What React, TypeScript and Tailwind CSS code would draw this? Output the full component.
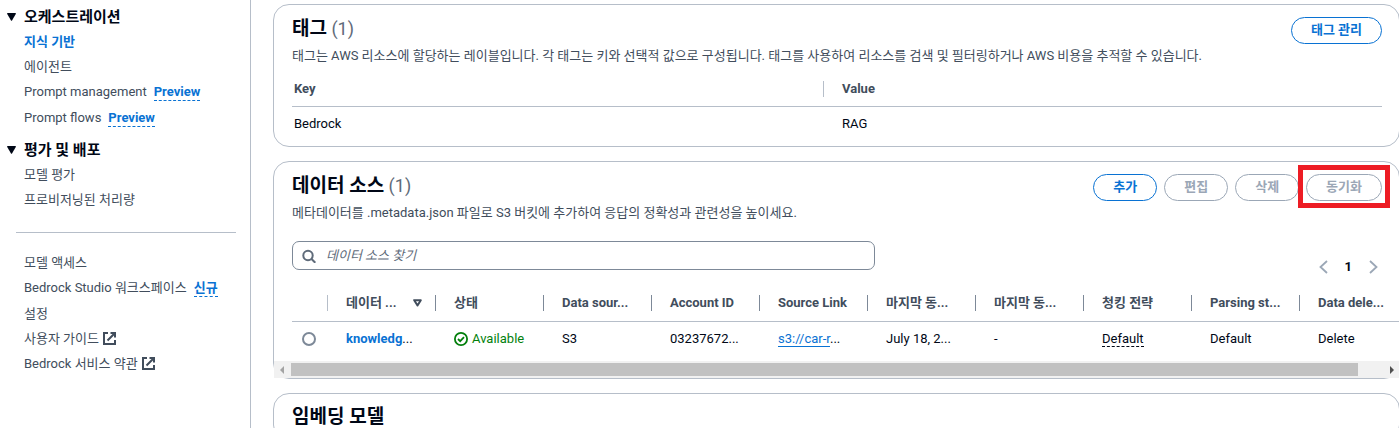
import { clsx } from "clsx";
import type { ReactNode } from "react";

interface NavItem {
  label: string;
  badge?: string;
  active?: boolean;
  external?: boolean;
}

const orchestration: NavItem[] = [
  { label: "지식 기반", active: true },
  { label: "에이전트" },
  { label: "Prompt management", badge: "Preview" },
  { label: "Prompt flows", badge: "Preview" },
];

const evaluation: NavItem[] = [{ label: "모델 평가" }, { label: "프로비저닝된 처리량" }];

const general: NavItem[] = [
  { label: "모델 액세스" },
  { label: "Bedrock Studio 워크스페이스", badge: "신규" },
  { label: "설정" },
  { label: "사용자 가이드", external: true },
  { label: "Bedrock 서비스 약관", external: true },
];

const columns = [
  "데이터 ...",
  "상태",
  "Data sour...",
  "Account ID",
  "Source Link",
  "마지막 동...",
  "마지막 동...",
  "청킹 전략",
  "Parsing st...",
  "Data dele...",
];

function ExternalIcon() {
  return (
    <svg className="size-[13px] shrink-0" viewBox="0 0 13 13" fill="none" stroke="currentColor" strokeWidth="2">
      <path d="M5 1H1v11h11V8" />
      <path d="M7.5 1H12v4.5M12 1 4.5 8.5" />
    </svg>
  );
}

function SearchIcon() {
  return (
    <svg className="size-[14px] shrink-0 text-[#5f6b7a]" viewBox="0 0 14 14" fill="none" stroke="currentColor" strokeWidth="2">
      <circle cx="6" cy="6.5" r="4.7" />
      <path d="m9.5 10 3.8 3.8" />
    </svg>
  );
}

function StatusIcon() {
  return (
    <svg className="size-[14px] shrink-0" viewBox="0 0 14 14" fill="none" stroke="currentColor" strokeWidth="1.8">
      <circle cx="7" cy="7" r="6.1" />
      <path d="m4 7 2.2 2.2L10 5.2" />
    </svg>
  );
}

function NavLink({ item }: { item: NavItem }) {
  return (
    <li className={clsx("flex items-center gap-[7px] whitespace-nowrap", item.badge ? "h-[26px]" : "h-[25px]")}>
      <a
        href="#"
        className={clsx("flex items-center gap-1", item.active ? "font-bold text-[#0972d3]" : "text-[#414d5c]")}
      >
        {item.label}
        {item.external && <ExternalIcon />}
      </a>
      {item.badge && (
        <a href="#" className="border-b border-dashed border-[#0972d3] leading-[17px] font-bold text-[#0972d3]">
          {item.badge}
        </a>
      )}
    </li>
  );
}

function NavSection({ title, items }: { title: string; items: NavItem[] }) {
  return (
    <section>
      <button type="button" className="flex h-[25px] items-center gap-2 text-[15px] font-bold text-[#000716]">
        <svg className="h-2 w-[9px]" viewBox="0 0 9 8" fill="currentColor">
          <path d="M.5 0h8Q9 .2 8.8 1L5 7.5Q4.5 8.2 4 7.5L.2 1Q0 .2.5 0Z" />
        </svg>
        {title}
      </button>
      <ul className="pl-[17px]">
        {items.map((item) => (
          <NavLink key={item.label} item={item} />
        ))}
      </ul>
    </section>
  );
}

function Button({ children, disabled }: { children: ReactNode; disabled?: boolean }) {
  return (
    <button
      type="button"
      disabled={disabled}
      className={clsx(
        "flex h-[27px] items-center rounded-full border px-[19px] pb-[2px] font-bold whitespace-nowrap",
        disabled ? "border-[#9ba7b6] text-[#9ba7b6]" : "border-[#0972d3] text-[#0972d3]",
      )}
    >
      {children}
    </button>
  );
}

function Title({ children, count }: { children: string; count?: number }) {
  return (
    <h2 className="text-[19px] leading-6 font-bold text-[#000716]">
      {children}
      {count !== undefined && <span className="text-[18px] font-normal text-[#5f6b7a]"> ({count})</span>}
    </h2>
  );
}

function Card({ children }: { children: ReactNode }) {
  return <section className="relative rounded-2xl border border-[#b6bec9] bg-white">{children}</section>;
}

function TagsCard() {
  return (
    <Card>
      <div className="pt-3 pr-[17px] pb-[5px] pl-[18px]">
        <div className="flex items-start justify-between">
          <Title count={1}>태그</Title>
          <Button>태그 관리</Button>
        </div>
        <p className="leading-6 text-[#414d5c]">
          태그는 AWS 리소스에 할당하는 레이블입니다. 각 태그는 키와 선택적 값으로 구성됩니다. 태그를 사용하여 리소스를
          검색 및 필터링하거나 AWS 비용을 추적할 수 있습니다.
        </p>
        <table className="mt-1 w-full table-fixed text-left">
          <thead>
            <tr className="border-b border-[#b6bec9] text-[#414d5c]">
              <th className="h-[34px] w-[532px] pl-[2px]">
                <div className="flex h-4 items-center border-r border-[#b6bec9]">Key</div>
              </th>
              <th className="pl-[18px]">Value</th>
            </tr>
          </thead>
          <tbody>
            <tr>
              <td className="h-[35px] pl-[2px]">Bedrock</td>
              <td className="pl-[18px]">RAG</td>
            </tr>
          </tbody>
        </table>
      </div>
    </Card>
  );
}

function Scrollbar() {
  return (
    <div className="flex h-[17px] items-center bg-[#f1f1f1]">
      <svg className="h-2 w-[17px] shrink-0 text-[#a3a3a3]" viewBox="0 0 17 8" fill="currentColor">
        <path d="M10 0v8L6 4Z" />
      </svg>
      <div className="h-[13px] grow bg-[#c1c1c1]" />
      <svg className="ml-6 h-2 w-[17px] shrink-0 text-[#505050]" viewBox="0 0 17 8" fill="currentColor">
        <path d="M8 0v8l4-4Z" />
      </svg>
    </div>
  );
}

function DataSourceTable() {
  return (
    <div className="overflow-hidden pb-[5px] pl-[18px]">
      <table className="w-[1116px] table-fixed text-left whitespace-nowrap">
        <thead>
          <tr className="border-b border-[#b6bec9] text-[#414d5c]">
            <th className="h-9 w-9">
              <div className="h-4 border-r border-[#b6bec9]" />
            </th>
            {columns.map((column, i) => (
              <th key={i} className="w-[108px]">
                <div className="flex h-4 items-center justify-between border-r border-[#7d8998] pr-[13px] pl-[18px]">
                  {column}
                  {i === 0 && (
                    <svg className="h-2 w-[9px]" viewBox="0 0 9 8" fill="none" stroke="currentColor" strokeWidth="2">
                      <path d="M1.2 1.2h6.6L4.5 6.5Z" strokeLinejoin="round" />
                    </svg>
                  )}
                </div>
              </th>
            ))}
          </tr>
        </thead>
        <tbody>
          <tr className="[&>td]:pl-[18px]">
            <td className="h-[35px] pl-[10px]!">
              <input
                type="radio"
                name="source"
                aria-label="knowledge-base"
                className="block size-[14px] appearance-none rounded-full border-2 border-[#7d8998]"
              />
            </td>
            <td>
              <a href="#" className="font-bold text-[#0972d3]">
                knowledg
              </a>
              ...
            </td>
            <td>
              <span className="flex items-center gap-1 text-[#037f0c]">
                <StatusIcon />
                Available
              </span>
            </td>
            <td>S3</td>
            <td>03237672...</td>
            <td>
              <a href="#" className="border-b border-[#0972d3] text-[#0972d3]">
                s3://car-r
              </a>
              ...
            </td>
            <td>July 18, 2...</td>
            <td>-</td>
            <td>
              <span className="border-b border-dashed border-[#000716]">Default</span>
            </td>
            <td>Default</td>
            <td>Delete</td>
          </tr>
        </tbody>
      </table>
    </div>
  );
}

function DataSourceCard() {
  return (
    <Card>
      <div className="pt-3 pr-[17px] pl-[18px]">
        <div className="flex items-start justify-between">
          <Title count={1}>데이터 소스</Title>
          <div className="flex gap-[7px]">
            <Button>추가</Button>
            <Button disabled>편집</Button>
            <Button disabled>삭제</Button>
            <div className="relative">
              <Button disabled>동기화</Button>
              <div className="pointer-events-none absolute -inset-x-2 -top-[9px] -bottom-[7px] border-[5px] border-[#ed1c24]" />
            </div>
          </div>
        </div>
        <p className="leading-6 text-[#414d5c]">
          메타데이터를 .metadata.json 파일로 S3 버킷에 추가하여 응답의 정확성과 관련성을 높이세요.
        </p>
        <div className="mt-4 flex justify-between">
          <label className="flex h-[29px] w-[583px] items-center gap-[10px] rounded-[7px] border border-[#7d8998] px-[9px]">
            <SearchIcon />
            <input
              type="search"
              aria-label="데이터 소스 찾기"
              placeholder="데이터 소스 찾기"
              className="min-w-0 grow outline-none placeholder:text-[#5f6b7a] placeholder:italic"
            />
          </label>
          <div className="flex items-center gap-[17px] self-end pt-4 pr-1 text-[#9ba7b6]">
            <button type="button" aria-label="이전">
              <svg className="h-[14px] w-[9px]" viewBox="0 0 9 14" fill="none" stroke="currentColor" strokeWidth="1.8">
                <path d="M8 1 1.5 7 8 13" />
              </svg>
            </button>
            <button type="button" className="font-bold text-[#000716]">
              1
            </button>
            <button type="button" aria-label="다음">
              <svg className="h-[14px] w-[9px]" viewBox="0 0 9 14" fill="none" stroke="currentColor" strokeWidth="1.8">
                <path d="m1 1 6.5 6L1 13" />
              </svg>
            </button>
          </div>
        </div>
      </div>
      <div className="mt-2">
        <DataSourceTable />
        <Scrollbar />
      </div>
    </Card>
  );
}

export default function App() {
  return (
    <div className="flex h-screen overflow-hidden bg-white font-[Roboto,'Noto_Sans_CJK_KR',sans-serif] text-[13px] leading-5 text-[#000716]">
      <nav className="w-[251px] shrink-0 border-r border-[#b6bec9] pt-1 pr-[14px] pl-[7px]">
        <NavSection title="오케스트레이션" items={orchestration} />
        <div className="mt-[6px]">
          <NavSection title="평가 및 배포" items={evaluation} />
        </div>
        <hr className="mt-5 ml-[9px] border-[#b6bec9]" />
        <ul className="mt-[17px] pl-[17px]">
          {general.map((item) => (
            <NavLink key={item.label} item={item} />
          ))}
        </ul>
      </nav>
      <main className="-mr-px flex min-w-0 grow flex-col gap-[14px] pt-1 pl-[22px]">
        <TagsCard />
        <DataSourceCard />
        <Card>
          <div className="px-[18px] py-[11px]">
            <Title>임베딩 모델</Title>
          </div>
        </Card>
      </main>
    </div>
  );
}
